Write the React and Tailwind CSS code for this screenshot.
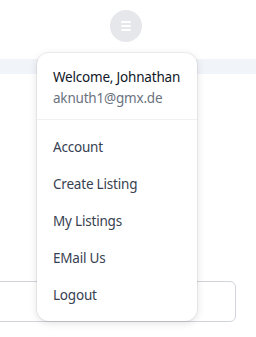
import React from 'react';

const items = ['Account', 'Create Listing', 'My Listings', 'EMail Us', 'Logout'];

export default function App() {
    return (
        <div className="relative h-[337px] w-[256px] overflow-hidden bg-white font-['Noto_Sans',sans-serif]">
            <div className="flex justify-center pt-[10px] pr-[5px]">
                <div className="flex h-8 w-8 items-center justify-center rounded-full bg-[#e5e7eb]">
                    <div className="flex flex-col gap-[2px]">
                        <span className="block h-[2px] w-[10px] rounded bg-white" />
                        <span className="block h-[2px] w-[10px] rounded bg-white" />
                        <span className="block h-[2px] w-[10px] rounded bg-white" />
                    </div>
                </div>
            </div>
            <div className="mt-[17px] h-[15px] w-full bg-[#f1f5f9]" />

            {/* input behind the menu */}
            <div className="absolute left-[-10px] top-[281px] h-[41px] w-[246px] rounded-md border border-[#d1d5db]" />

            {/* dropdown */}
            <div className="absolute left-[37px] top-[53px] w-[160px] rounded-xl bg-white shadow-[0_2px_8px_rgba(0,0,0,0.12)] ring-1 ring-black/5">
                <div className="whitespace-nowrap border-b border-[#f1f1f3] px-4 pt-[14px] pb-[11px] text-[13.5px] tracking-[-0.2px]">
                    <p className="leading-5 text-[#111827]">Welcome, Johnathan</p>
                    <p className="mt-px leading-5 text-[#6b7280]">aknuth1@gmx.de</p>
                </div>
                <div className="pt-[9px] pb-[7px]">
                    {items.map((item) => (
                        <div key={item} className="flex h-[37px] items-center px-4 text-[13.5px] tracking-[-0.2px] text-[#374151]">
                            {item}
                        </div>
                    ))}
                </div>
            </div>
        </div>
    );
}
